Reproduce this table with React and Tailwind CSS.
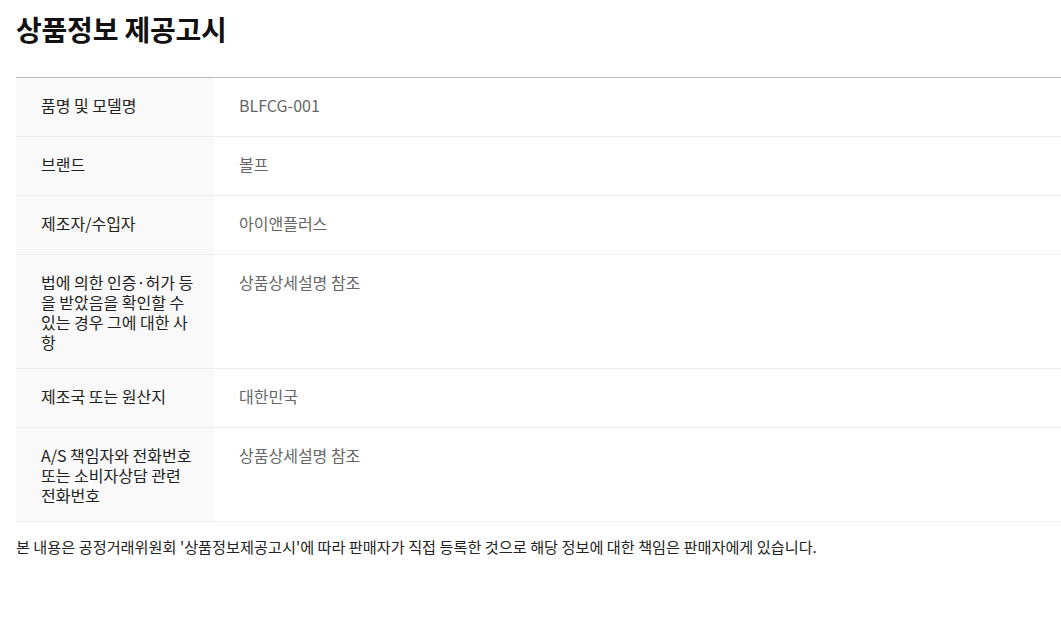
import React from "react";

// labels split into the lines they wrap to in the cell
const rows = [
  { label: ["품명 및 모델명"], value: "BLFCG-001" },
  { label: ["브랜드"], value: "볼프" },
  { label: ["제조자/수입자"], value: "아이앤플러스" },
  {
    label: ["법에 의한 인증·허가 등", "을 받았음을 확인할 수", "있는 경우 그에 대한 사", "항"],
    value: "상품상세설명 참조",
  },
  { label: ["제조국 또는 원산지"], value: "대한민국" },
  {
    label: ["A/S 책임자와 전화번호", "또는 소비자상담 관련", "전화번호"],
    value: "상품상세설명 참조",
  },
];

const App = () => {
  return (
    <div
      className="min-h-screen bg-white pl-4 pt-[11px]"
      style={{ fontFamily: '"Noto Sans CJK KR", "Noto Sans", sans-serif' }}
    >
      {/* Title */}
      <h2 className="text-[28px] leading-[36px] font-bold text-[#111] tracking-[-0.2px]">
        상품정보 제공고시
      </h2>

      {/* Info table */}
      <table className="w-full mt-[30px] border-t border-[#bbbbbb] border-collapse table-fixed">
        <tbody>
          {rows.map((row, i) => (
            <tr key={i} className="border-b border-[#eeeeee]">
              <th className="w-[198px] h-[59px] bg-[#f9f9f9] pl-[25px] pr-2 pt-[17px] pb-[16px] text-left align-top text-[16px] leading-[20px] font-normal text-[#222] whitespace-nowrap">
                {row.label.map((line, j) => (
                  <div key={j}>{line}</div>
                ))}
              </th>
              <td className="h-[59px] pl-[25px] pr-4 pt-[17px] pb-[16px] align-top text-[16px] leading-[20px] text-[#666]">
                {row.value}
              </td>
            </tr>
          ))}
        </tbody>
      </table>

      {/* Footer note */}
      <p className="mt-[14px] text-[15.2px] leading-[20px] text-[#222]">
        본 내용은 공정거래위원회 '상품정보제공고시'에 따라 판매자가 직접 등록한 것으로 해당 정보에 대한 책임은 판매자에게 있습니다.
      </p>
    </div>
  );
};

export default App;
